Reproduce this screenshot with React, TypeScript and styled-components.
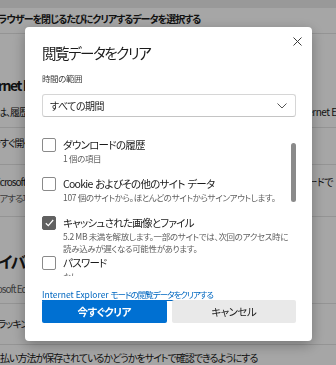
import styled, { createGlobalStyle } from 'styled-components';

const GlobalStyle = createGlobalStyle`
  html, body {
    margin: 0;
    padding: 0;
    overflow: hidden;
  }
  body {
    font-family: "Noto Sans CJK JP", "Noto Sans", sans-serif;
    font-feature-settings: "palt";
    background: #ffffff;
    color: #1b1b1b;
  }
`;

/** 背景の設定ページ */
const Page = styled.div`
  width: 336px;
  height: 365px;
  overflow: hidden;
  display: flex;
  flex-direction: column;
`;

const TopStrip = styled.div`
  height: 8px;
  background: #ebebeb;
  flex-shrink: 0;
`;

const Row = styled.div<{ $h: number; $line?: boolean; $shift?: number }>`
  height: ${(p) => p.$h}px;
  box-sizing: border-box;
  padding-bottom: ${(p) => Math.max(0, p.$shift ?? 0)}px;
  padding-top: ${(p) => Math.max(0, -(p.$shift ?? 0))}px;
  flex-shrink: 0;
  display: flex;
  flex-direction: column;
  justify-content: center;
  border-bottom: ${(p) => (p.$line ? '1px solid #e3e3e3' : 'none')};
  overflow: hidden;
`;

const Line = styled.div`
  display: flex;
  justify-content: space-between;
  white-space: nowrap;
`;

const Text = styled.span<{ $cut?: number; $size?: number; $weight?: number; $muted?: boolean }>`
  margin-left: ${(p) => -(p.$cut ?? 0)}px;
  white-space: nowrap;
  font-size: ${(p) => p.$size ?? 10}px;
  font-weight: ${(p) => p.$weight ?? 400};
  letter-spacing: -0.1em;
  color: ${(p) => (p.$muted ? '#5e5e5e' : '#1b1b1b')};
  line-height: 16px;
`;

const RightText = styled.span<{ $out: number }>`
  margin-right: ${(p) => -p.$out}px;
  flex-shrink: 0;
  font-size: 10px;
  letter-spacing: -0.05em;
  color: #1b1b1b;
  line-height: 16px;
`;

const Heading = styled.div<{ $pad: number }>`
  padding-top: ${(p) => p.$pad}px;
  flex-shrink: 0;
  display: flex;
  height: 22px;
  align-items: center;
`;

const Overlay = styled.div`
  position: fixed;
  inset: 0;
  background: rgba(0, 0, 0, 0.35);
`;

/** 閲覧データのクリアダイアログ */
const Dialog = styled.div`
  position: fixed;
  left: 25px;
  top: 27px;
  width: 287px;
  height: 314px;
  box-sizing: border-box;
  padding: 15px 16px 18px 17px;
  background: #ffffff;
  border-radius: 4px;
  box-shadow: 0 4px 14px rgba(0, 0, 0, 0.3);
  display: flex;
  flex-direction: column;
`;

const CloseButton = styled.button`
  position: absolute;
  top: 7px;
  right: 8px;
  width: 14px;
  height: 14px;
  padding: 0;
  border: none;
  background: none;
  display: flex;
  align-items: center;
  justify-content: center;
`;

const Title = styled.h2`
  margin: 0;
  font-size: 14.5px;
  font-weight: 400;
  letter-spacing: -0.1em;
  line-height: 22px;
  color: #1b1b1b;
`;

const FieldLabel = styled.div`
  margin-top: 8px;
  font-size: 8.5px;
  letter-spacing: -0.05em;
  line-height: 12px;
  color: #3b3b3b;
`;

const Select = styled.div`
  margin-top: 10px;
  height: 23px;
  box-sizing: border-box;
  border: 1px solid #d6d6d6;
  border-bottom-color: #c4c4c4;
  border-radius: 3px;
  display: flex;
  align-items: center;
  justify-content: space-between;
  padding: 0 8px 0 7px;
  font-size: 10px;
  letter-spacing: -0.05em;
  color: #1b1b1b;
`;

const ScrollArea = styled.div`
  margin-top: 10px;
  height: 149px;
  overflow: hidden;
  position: relative;
  display: flex;
  flex-direction: column;
  gap: 2px;
  padding-top: 11px;
  box-sizing: border-box;
`;

const ScrollThumb = styled.div`
  position: absolute;
  right: 0;
  top: 16px;
  width: 5px;
  height: 59px;
  border-radius: 3px;
  background: #8a8a8a;
`;

const Item = styled.div`
  min-height: 37px;
  flex-shrink: 0;
  display: flex;
  gap: 7px;
  align-items: flex-start;
`;

const Box = styled.span<{ $checked?: boolean }>`
  width: 14px;
  height: 14px;
  flex-shrink: 0;
  box-sizing: border-box;
  border-radius: 2px;
  border: 1px solid ${(p) => (p.$checked ? '#616161' : '#8a8a8a')};
  background: ${(p) => (p.$checked ? '#616161' : '#ffffff')};
  display: flex;
  align-items: center;
  justify-content: center;
`;

const ItemText = styled.div`
  display: flex;
  flex-direction: column;
  min-width: 0;
`;

const ItemLabel = styled.div`
  font-size: 10.5px;
  letter-spacing: -0.07em;
  word-spacing: 1px;
  line-height: 14px;
  white-space: nowrap;
  color: #1b1b1b;
`;

const ItemSub = styled.div`
  font-size: 8.5px;
  letter-spacing: -0.04em;
  line-height: 12px;
  white-space: nowrap;
  color: #616161;
`;

const IeLink = styled.a`
  margin-top: auto;
  font-size: 8.5px;
  line-height: 12px;
  white-space: nowrap;
  color: #0067c0;
  text-decoration: underline;
  text-underline-offset: 2px;
  cursor: pointer;
`;

const LinkJa = styled.span`
  letter-spacing: -0.12em;
`;

const Buttons = styled.div`
  display: grid;
  grid-template-columns: 1fr 1fr;
  gap: 5px;
`;

const Button = styled.button<{ $primary?: boolean }>`
  height: 23px;
  border: none;
  border-radius: 2px;
  font-family: inherit;
  font-feature-settings: "palt";
  font-size: 10.5px;
  letter-spacing: -0.05em;
  font-weight: ${(p) => (p.$primary ? 700 : 400)};
  background: ${(p) => (p.$primary ? '#0070d2' : '#e9e9e9')};
  color: ${(p) => (p.$primary ? '#ffffff' : '#1b1b1b')};
`;

const items = [
  { label: 'ダウンロードの履歴', sub: ['1 個の項目'], checked: false },
  {
    label: 'Cookie およびその他のサイト データ',
    sub: ['107 個のサイトから。ほとんどのサイトからサインアウトします。'],
    checked: false
  },
  {
    label: 'キャッシュされた画像とファイル',
    sub: ['5.2 MB 未満を解放します。一部のサイトでは、次回のアクセス時に', '読み込みが遅くなる可能性があります。'],
    checked: true
  },
  { label: 'パスワード', sub: ['なし'], checked: false }
];

export default function App() {
  return (
    <>
      <GlobalStyle />
      <Page>
        <TopStrip />
        <Row $h={26} $line $shift={4}>
          <Text $cut={10} $weight={600}>ブラウザーを閉じるたびにクリアするデータを選択する</Text>
        </Row>
        <Heading $pad={40}>
          <Text $cut={24} $size={14} $weight={600}>Internet Explorer の閲覧データ</Text>
        </Heading>
        <Row $h={32} $line>
          <Line>
            <Text $cut={36}>これまでは、履歴が保存されていました。</Text>
            <RightText $out={30}>Internet Explorer</RightText>
          </Line>
        </Row>
        <Row $h={37} $line $shift={7}>
          <Text $cut={9}>今すぐ開く</Text>
        </Row>
        <Row $h={52} $line $shift={2}>
          <Line>
            <Text $cut={9}>Microsoft Edge を閉じるたびにクリア</Text>
            <RightText $out={-3}>モードで</RightText>
          </Line>
          <Text $cut={15} $size={9.5} $muted>クリアする項目を選択します</Text>
        </Row>
        <Heading $pad={33}>
          <Text $cut={28} $size={16} $weight={600}>プライバシー</Text>
        </Heading>
        <Row $h={32} $line $shift={-2}>
          <Text $cut={19} $muted>Microsoft Edge のプライバシー設定を選択します</Text>
        </Row>
        <Row $h={41} $line>
          <Text $cut={9}>トラッキング防止</Text>
        </Row>
        <Row $h={26}>
          <Text $cut={9}>支払い方法が保存されているかどうかをサイトで確認できるようにする</Text>
        </Row>
      </Page>
      <Overlay />
      <Dialog>
        <CloseButton aria-label="閉じる">
          <svg width="9" height="9" viewBox="0 0 9 9">
            <path d="M0.5 0.5 L8.5 8.5 M8.5 0.5 L0.5 8.5" stroke="#3b3b3b" strokeWidth="1" />
          </svg>
        </CloseButton>
        <Title>閲覧データをクリア</Title>
        <FieldLabel>時間の範囲</FieldLabel>
        <Select>
          <span>すべての期間</span>
          <svg width="10" height="6" viewBox="0 0 10 6">
            <path d="M0.5 0.5 L5 5 L9.5 0.5" fill="none" stroke="#555" strokeWidth="1" />
          </svg>
        </Select>
        <ScrollArea>
          {items.map((it) => (
            <Item key={it.label}>
              <Box $checked={it.checked}>
                {it.checked && (
                  <svg width="9" height="8" viewBox="0 0 9 8">
                    <path d="M0.8 4.2 L3.3 6.6 L8.2 1" fill="none" stroke="#fff" strokeWidth="1.2" />
                  </svg>
                )}
              </Box>
              <ItemText>
                <ItemLabel>{it.label}</ItemLabel>
                {it.sub.map((s) => (
                  <ItemSub key={s}>{s}</ItemSub>
                ))}
              </ItemText>
            </Item>
          ))}
          <ScrollThumb />
        </ScrollArea>
        <IeLink>
          Internet Explorer <LinkJa>モードの閲覧データをクリアする</LinkJa>
        </IeLink>
        <Buttons>
          <Button $primary>今すぐクリア</Button>
          <Button>キャンセル</Button>
        </Buttons>
      </Dialog>
    </>
  );
}
